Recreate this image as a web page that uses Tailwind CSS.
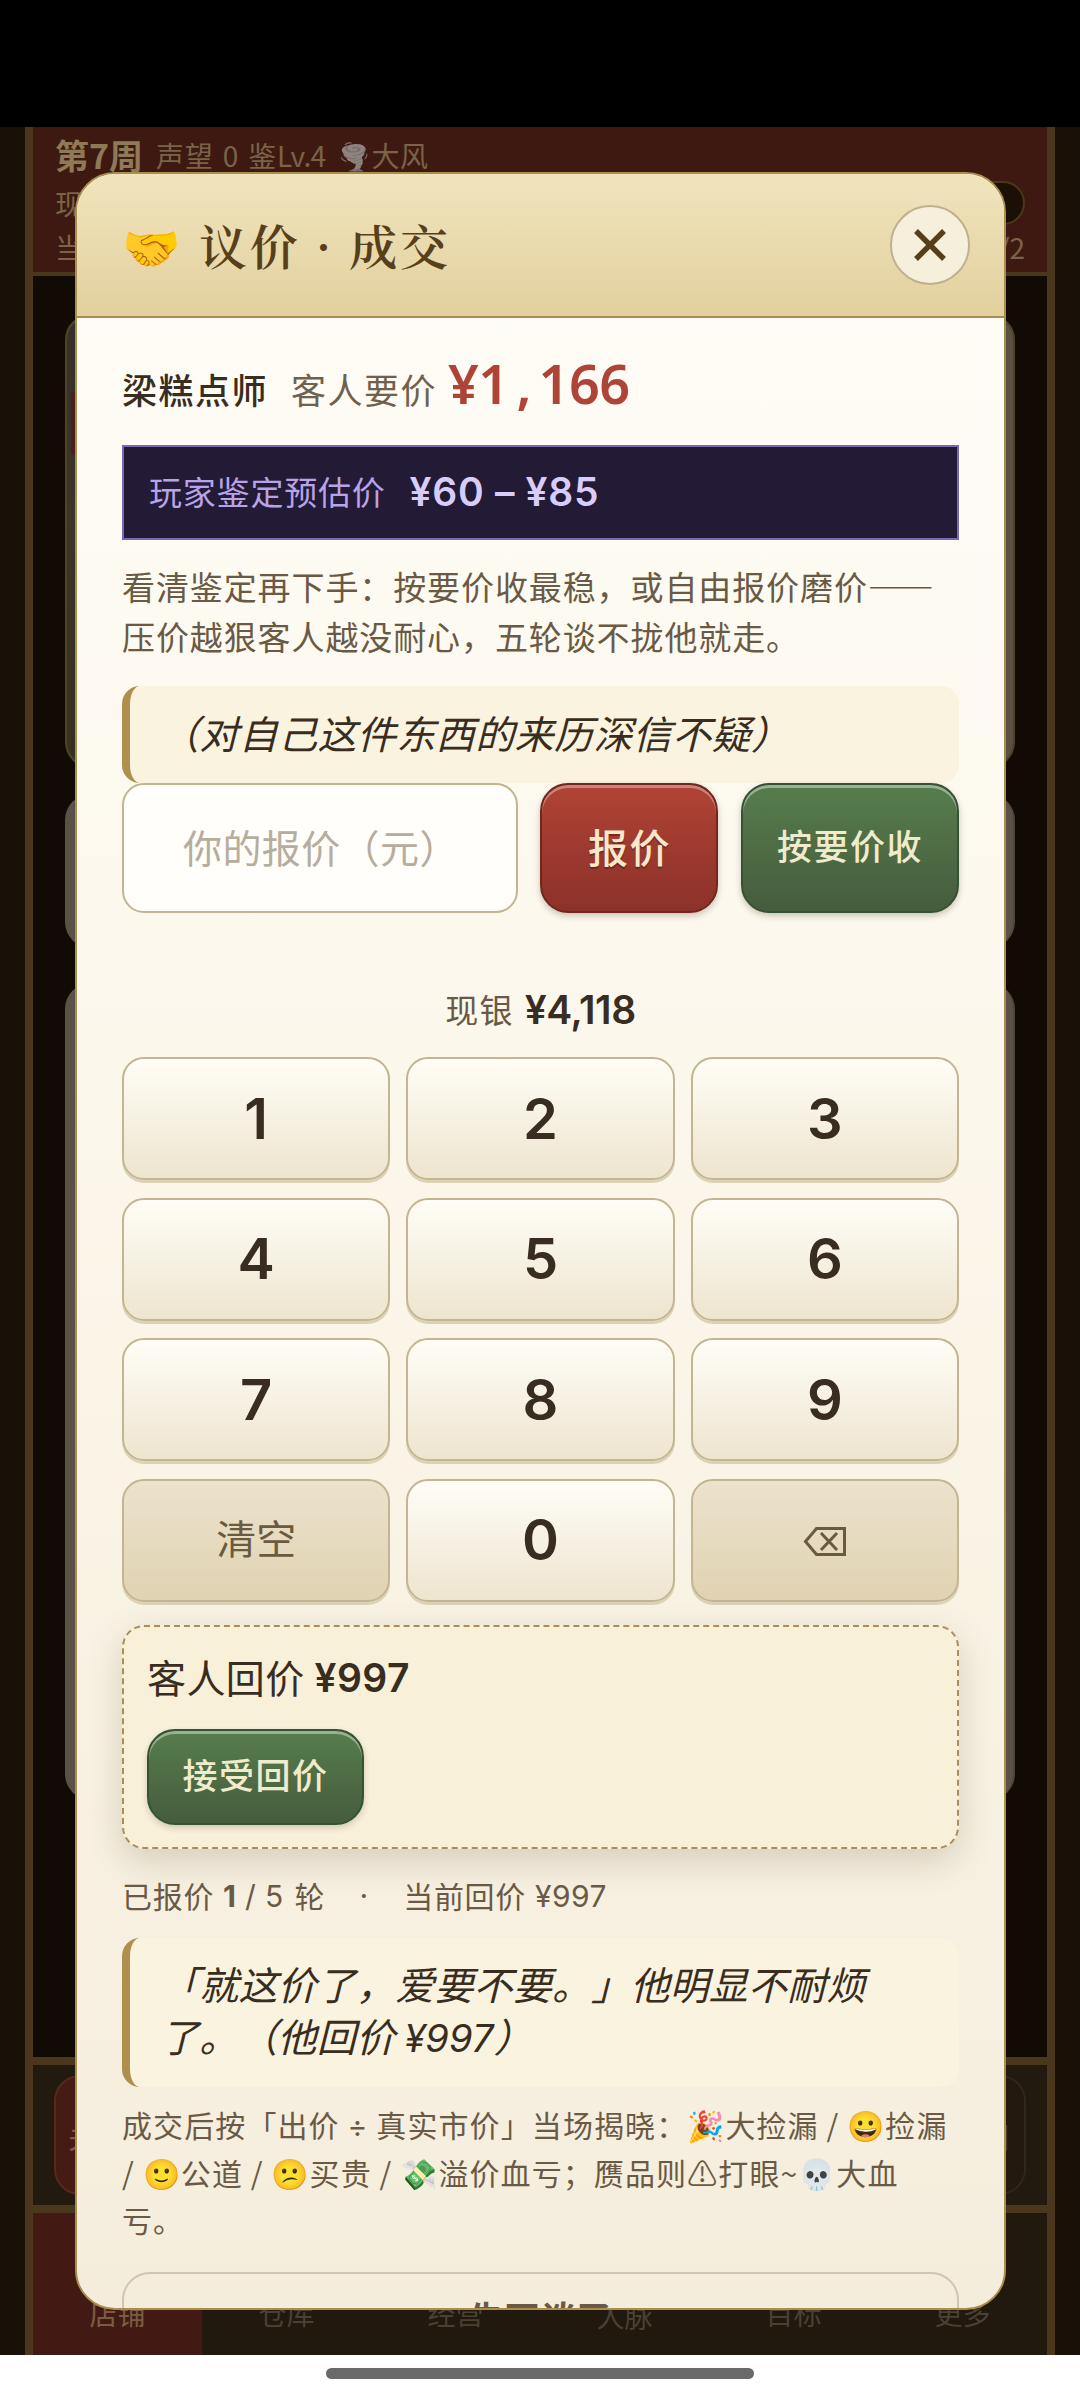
<!DOCTYPE html>
<html lang="zh-CN">
<head>
<meta charset="utf-8">
<title>议价 · 成交</title>
<script src="https://cdn.jsdelivr.net/npm/@tailwindcss/browser@4"></script>
</head>
<body class="relative flex h-[2400px] w-[1080px] flex-col overflow-hidden whitespace-nowrap bg-white font-['Noto_Sans_CJK_SC',sans-serif] text-[#382d20] [text-spacing-trim:space-all]">
  <div class="h-[127px] shrink-0 bg-black"></div>

  <!-- Dimmed game screen -->
  <main class="flex h-[2228px] shrink-0 bg-[#191007] px-[25px]">
    <div class="flex w-full flex-col border-x-8 border-[#4b371b] bg-[#120a04]">
      <header class="flex h-[149px] shrink-0 flex-col border-b-4 border-[#4b371b] bg-[#3e1912] px-[22px] text-[28px] text-[#7a6347]">
        <div class="flex h-[54px] items-center pt-[2px] leading-[54px]"><b class="mr-[13px] text-[34px] text-[#8f7a58]">第7周</b><span class="tracking-[0.8px]">声望 <span class="mx-[2px]">0</span> 鉴<span class="tracking-[-0.6px]">Lv.4</span></span><span class="ml-[12px] w-[34px] text-[26px] opacity-50">🌪️</span><span class="tracking-[0.4px]">大风</span></div>
        <div class="flex h-[44px] items-center justify-between"><span>现银</span><span class="h-[44px] w-[120px] rounded-full border-2 border-[#4b371b] bg-[#1c0f06]"></span></div>
        <div class="flex h-[44px] items-center justify-between leading-[44px]"><span>当前</span><span>2/2</span></div>
      </header>
      <section class="flex h-[1781px] shrink-0 flex-col gap-[26px] px-8 pt-[38px]">
        <div class="flex h-[454px] shrink-0 justify-between overflow-hidden rounded-[26px] border-2 border-[#4e4229] bg-[#5b4f42]"><div class="w-12 bg-linear-to-b from-[#37302a] via-[#3c3527] to-[#35301f] pt-[75px]"><div class="ml-1 h-16 w-8 rounded bg-[#4a2019]"></div></div></div>
        <div class="h-[154px] shrink-0 rounded-[26px] border-r-2 border-[#4f4539] bg-[#5b5146]"></div>
        <div class="mt-[9px] h-[817px] shrink-0 rounded-[26px] border-r-2 border-[#4f4539] bg-[#5b5146]"></div>
      </section>
      <div class="flex h-[156px] shrink-0 items-center justify-between border-y-8 border-[#4b371b] bg-[#22190f] px-[21px] text-[30px] text-[#7a5c45]">
        <div class="h-[120px] w-[230px] rounded-[26px] border-2 border-[#552a1c] bg-[#451b14] pl-3 leading-[116px]">关店</div>
        <div class="h-[120px] w-[180px] rounded-[26px] border-2 border-[#30271b] pr-3 text-right leading-[116px] text-[#4a4032]">日</div>
      </div>
      <nav class="grid flex-1 grid-cols-6 bg-[#21180e] pt-[78px] text-center text-[28px] leading-[44px] text-[#4b4132]">
        <span class="-mt-[78px] bg-[#431a13] pt-[78px] text-[#7a5c45]">店铺</span><span>仓库</span><span>经营</span><span class="pt-[3px]">人脉</span><span>目标</span><span>更多</span>
      </nav>
    </div>
  </main>
  <div class="flex flex-1 justify-center pt-[13px]"><div class="h-[11px] w-[428px] rounded-full bg-[#696969]"></div></div>

  <!-- Dialog -->
  <div role="dialog" class="absolute left-[75px] top-[172px] flex h-[2138px] w-[931px] flex-col overflow-hidden rounded-[40px] border-2 border-[#a98e50] bg-linear-to-b from-[#fffdf8] via-[#fbf6e9] to-[#f5eddc]">
    <header class="flex h-[144px] shrink-0 items-center border-b-2 border-[#a98e50] bg-linear-to-b from-[#f1e4bd] to-[#e2d09e] pl-[45px] pr-[34px] text-[#573f1b]">
      <span class="w-[58px] text-[47px] leading-[60px]">🤝</span>
      <h1 class="ml-[19px] font-['Noto_Serif_CJK_SC','Noto_Sans_CJK_SC',serif] text-[48px] font-semibold tracking-[2.800px]">议价 · 成交</h1>
      <button class="ml-auto flex size-[80px] items-center justify-center rounded-full border-2 border-[#c0b08d] bg-[#f6efdc]">
        <svg class="size-[34px]" viewBox="0 0 34 34" fill="none" stroke="#573f1b" stroke-width="5.500"><path d="M3 3L31 31M31 3L3 31"/></svg>
      </button>
    </header>

    <div class="flex flex-1 flex-col pl-[45px] pr-[45px]">
      <div class="mt-[27px] flex h-[80px] items-baseline text-[35px] leading-[76px] tracking-[1.5px]">
        <b class="font-medium">梁糕点师</b><span class="ml-[23px] text-[#6f614c]">客人要价</span>
        <b class="ml-[11px] font-['Noto_Sans',sans-serif] text-[54px] font-semibold tracking-[-0.6px] text-[#ad4437]">¥1<span class="inline-block w-[30px] text-center">,</span>166</b>
      </div>
      <div class="mt-[20px] flex h-[95px] shrink-0 items-center border-2 border-[#7b67b2] bg-[#231a36] pb-[2px] pl-[25px] text-[33px] tracking-[0.8px] text-[#b8a2e8]">玩家鉴定预估价<b class="ml-[24px] mt-[1px] font-['Inter'] text-[39px] font-semibold tracking-[0.7px] text-[#d8ccfa]">¥60 – ¥85</b></div>
      <p class="mt-[21px] shrink-0 text-[33px] leading-[50px] tracking-[0.9px] text-[#6a5a45]">看清鉴定再下手：按要价收最稳，或自由报价磨价——<br>压价越狠客人越没耐心，五轮谈不拢他就走。</p>
      <div class="mt-[25px] h-[97px] shrink-0 rounded-[18px] border-l-8 border-[#ae8f4e] bg-[#faf3df] pl-[30px] text-[39px] italic leading-[92px] tracking-[0.4px]">（对自己这件东西的来历深信不疑）</div>
      <div class="flex h-[130px] shrink-0 text-center">
        <div class="w-[396px] rounded-[22px] border-2 border-[#c3b592] bg-[#fffefa] pl-[59px] text-left text-[39px] leading-[122px] tracking-[0.4px] text-[#b5ad9d]">你的报价（元）</div>
        <button class="ml-[22px] w-[178px] rounded-[28px] border-2 border-[#71271f] bg-linear-to-b from-[#b04335] to-[#8c312a] pb-[5px] pl-[1px] text-[40px] font-medium tracking-[1.5px] text-[#f9e7ca] shadow-[0_3px_6px_rgba(60,40,10,0.25),inset_0_3px_0_rgba(255,255,255,0.35)] [text-shadow:0_2px_1px_rgba(0,0,0,0.3)]">报价</button>
        <button class="ml-[23px] w-[218px] rounded-[28px] border-2 border-[#365233] bg-linear-to-b from-[#567d4d] to-[#465c3d] pb-[5px] text-[35px] font-medium tracking-[1.5px] text-[#f0ebcd] shadow-[0_3px_6px_rgba(60,40,10,0.25),inset_0_3px_0_rgba(255,255,255,0.4)]">按要价收</button>
      </div>
      <div class="mt-[65px] flex h-[64px] shrink-0 items-center justify-center text-[33px] tracking-[1.2px] text-[#6a5a45]">现银<b class="ml-[11px] mt-[1px] font-['Inter'] text-[39px] font-semibold tracking-[-0.4px] text-[#382d20]">¥4,118</b></div>

      <div class="mt-[15px] grid shrink-0 auto-rows-[123px] grid-cols-3 gap-x-[16px] gap-y-[17.500px] font-['Inter'] text-[56px] font-[560] *:rounded-[22px] *:border-2 *:border-[#c3b592] *:bg-linear-to-b *:from-[#fffdf7] *:to-[#eee5cf] *:shadow-[0_3px_0_#dcd2b8]">
        <button>1</button><button>2</button><button>3</button>
        <button>4</button><button>5</button><button>6</button>
        <button>7</button><button>8</button><button>9</button>
        <button class="from-[#ece3cd]! to-[#e0d2b2]! pb-[6px] font-['Noto_Sans_CJK_SC'] text-[40px] font-normal text-[#6a5a3f]">清空</button><button>0</button>
        <button class="flex items-center justify-center from-[#ece3cd]! to-[#e0d2b2]!"><svg class="mt-[3px] h-[30px] w-[44px]" viewBox="0 0 44 30" fill="none" stroke="#6a5a3f" stroke-width="3"><path d="M13.500 1.500H41.500V27.500H13.500L2.500 14.500ZM18 6L34 23M34 6L18 23"/></svg></button>
      </div>

      <section class="mt-[23px] h-[224px] shrink-0 rounded-[22px] border-2 border-dashed border-[#a98e5c] bg-[#f9f0da] pl-[23px] pt-[22px] shadow-[0_12px_36px_rgba(80,65,30,0.2)]">
        <div class="flex h-[56px] items-center text-[39px] tracking-[0.4px]">客人回价<b class="ml-[10px] mt-[4px] font-['Inter'] text-[39px] font-semibold tracking-[0.4px]">¥997</b></div>
        <button class="mt-[24px] h-[96px] w-[217px] rounded-[28px] border-2 border-[#365233] bg-linear-to-b from-[#567d4d] to-[#465c3d] pb-[4px] text-[35px] font-medium tracking-[1.5px] text-[#f0ebcd] shadow-[0_3px_6px_rgba(60,40,10,0.2),inset_0_3px_0_rgba(255,255,255,0.4)]">接受回价</button>
      </section>

      <div class="mt-[21px] flex h-[50px] shrink-0 items-center text-[30px] leading-[50px] tracking-[0.7px] text-[#6a5a45]"><span>已报价</span><span class="ml-[9px] mt-[2px] font-['Inter'] tracking-[0.3px]"><b>1</b> / 5</span><span class="ml-[11px]">轮</span><span class="w-[78px] text-center font-['Inter']">·</span><span>当前回价</span><span class="ml-[9px] mt-[2px] font-['Inter'] tracking-[0.5px]">¥997</span></div>

      <div class="mt-[18px] h-[149px] shrink-0 rounded-[18px] border-l-8 border-[#ae8f4e] bg-[#faf3df] pl-[30px] pt-[19px] text-[39px] italic leading-[52px] tracking-[0.2px]">「就这价了，爱要不要。」他明显不耐烦<br>了。（他回价 <span class="font-['Inter'] text-[38px] tracking-[0.2px]">¥997</span>）</div>

      <p class="mt-[14px] shrink-0 text-[30px] leading-[46.500px] tracking-[1.1px] text-[#6a5a45]">成交后按「出价 <span class="font-['Inter']">÷</span> 真实市价」当场揭晓：🎉大捡漏 / 😀捡漏<br>/ 🙂公道 / 😕买贵 / 💸溢价血亏；赝品则⚠︎打眼~💀大血<br>亏。</p>
      <button class="mt-[30px] h-[100px] shrink-0 rounded-[28px] border-2 border-[#cfc5b0] pb-[9px] text-[35px] font-bold tracking-[1px] text-[#6a5a45]">先不谈了</button>
    </div>
  </div>
</body>
</html>
